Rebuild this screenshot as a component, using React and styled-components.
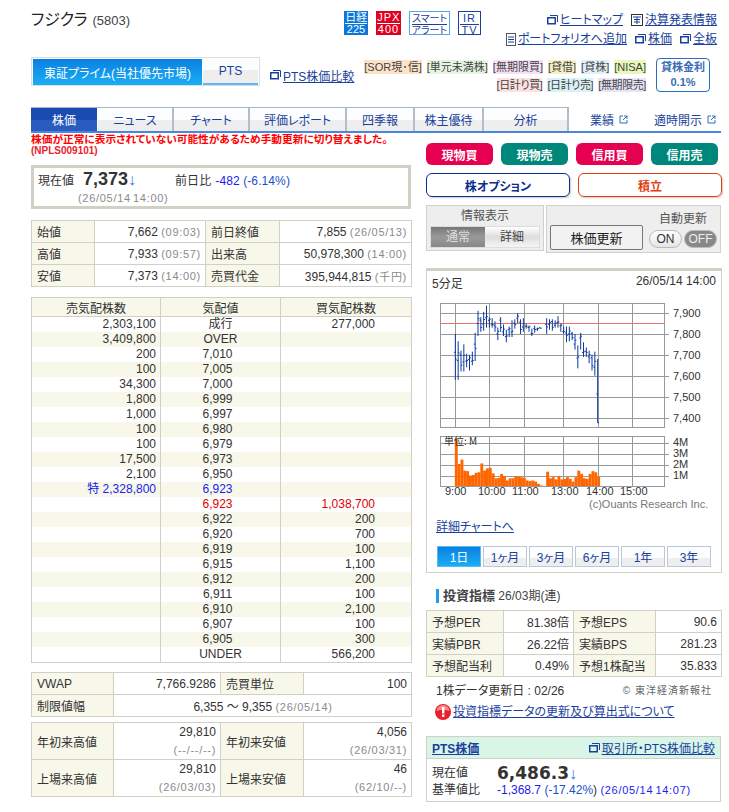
import React from 'react'
import styled, { createGlobalStyle } from 'styled-components'

const GlobalStyle = createGlobalStyle`
    html, body { margin: 0; padding: 0; background: #fff; }
    body {
        font-family: "Liberation Sans", "Noto Sans CJK JP", sans-serif;
        font-size: 12px;
        color: #333;
        font-feature-settings: "palt";
    }
    a { color: #1a3f9c; text-decoration: underline; }
    table { border-collapse: collapse; table-layout: fixed; }
`

const Page = styled.div`
    width: 729px;
    height: 812px;
    box-sizing: border-box;
    padding: 10px 0 0 31px;
    overflow: hidden;
`

const Header = styled.div`
    display: grid;
    grid-template-columns: 313px auto 1fr;
    width: 686px;
    height: 47px;
`

const Title = styled.h1`
    margin: 0;
    font-size: 16px;
    letter-spacing: -0.2px;
    font-weight: 400;
    line-height: 20px;
    color: #222;
    span { font-size: 13px; letter-spacing: 0; color: #444; margin-left: 5px; }
`

const Badges = styled.div`
    display: flex;
    align-items: flex-start;
    gap: 8px;
    padding-top: 1px;
`

const Badge = styled.div`
    box-sizing: border-box;
    width: ${(p) => p.$w}px;
    height: 24px;
    display: flex;
    flex-direction: column;
    align-items: center;
    font-size: ${(p) => p.$fs || 11}px;
    line-height: 11px;
    letter-spacing: ${(p) => p.$ls || 0}px;
    padding-top: 1px;
    color: ${(p) => p.$color || '#fff'};
    background: ${(p) => p.$bg || '#fff'};
    border: ${(p) => (p.$border ? `1px solid ${p.$border}` : 'none')};
    span:first-child { border-bottom: 1px solid currentColor; width: 90%; text-align: center; }
    span { white-space: nowrap; }
`

const HeadLinks = styled.div`
    display: flex;
    flex-direction: column;
    align-items: flex-end;
    gap: 5px;
    padding-top: 3px;
`

const LinkRow = styled.div`
    display: flex;
    gap: 8px;
    line-height: 14px;
`

const IconLink = styled.a`
    display: inline-flex;
    align-items: center;
    gap: 2px;
    white-space: nowrap;
    svg { flex: none; }
`

const MarketRow = styled.div`
    display: flex;
    width: 679px;
    height: 50px;
`

const MarketBox = styled.div`
    box-sizing: border-box;
    display: flex;
    width: 229px;
    height: 29px;
    border: 1px solid #ddd;
    padding: 1px;
`

const MarketTab = styled.div`
    display: flex;
    align-items: center;
    justify-content: center;
    height: 24px;
    width: ${(p) => p.$w}px;
    font-size: 12px;
    border-bottom: ${(p) => (p.$on ? 'none' : '2px solid #5bb8f0')};
    color: ${(p) => (p.$on ? '#fff' : '#1a3f9c')};
    background: ${(p) =>
        p.$on
            ? 'linear-gradient(#0a80e0, #1aaef5)'
            : 'linear-gradient(#fbfdff 45%, #eee 45%)'};
    ${(p) => p.$on && 'height: 26px; margin-right: 1px;'}
`

const CompareLink = styled(IconLink)`
    margin: 11px 0 0 10px;
    height: 14px;
`

const Tags = styled.div`
    margin: 3px 0 0 auto;
    width: 284px;
    display: flex;
    flex-wrap: wrap;
    justify-content: flex-end;
    align-content: flex-start;
    column-gap: 5px;
    row-gap: 4px;
`

const Tag = styled.span`
    font-size: 11px;
    line-height: 14px;
    white-space: nowrap;
    letter-spacing: ${(p) => (p.$tight ? -0.4 : 0)}px;
    color: #444;
    background: ${(p) => p.$bg};
`

const RateBox = styled.div`
    box-sizing: border-box;
    width: 54px;
    height: 34px;
    margin: 1px 0 0 10px;
    border: 1px solid #2a6fc0;
    border-radius: 4px;
    text-align: center;
    font-size: 11px;
    font-weight: 700;
    line-height: 15px;
    padding-top: 1px;
    color: #3a6db5;
`

const TabBar = styled.div`
    box-sizing: border-box;
    display: flex;
    width: 690px;
    height: 26px;
    border-bottom: 2px solid #4a86dc;
`

const TabMain = styled.div`
    display: flex;
    border-top: 1px solid #a9b6c8;
`

const Tab = styled.div`
    box-sizing: border-box;
    width: ${(p) => p.$w}px;
    height: 23px;
    display: flex;
    align-items: center;
    justify-content: center;
    color: ${(p) => (p.$on ? '#fff' : '#1a3f9c')};
    border-right: ${(p) => (p.$on ? '1px solid #fff' : '2px solid #b4bcc6')};
    background: ${(p) =>
        p.$on
            ? 'linear-gradient(#1a4bb0 50%, #2a5cc0 50%)'
            : 'linear-gradient(#fbfdff 50%, #eee 50%)'};
`

const TabExtra = styled.a`
    display: flex;
    align-items: center;
    gap: 5px;
    text-decoration: none;
    margin-left: ${(p) => p.$ml}px;
`

const Warning = styled.div`
    height: 33px;
    font-weight: 700;
    color: #f00;
    font-size: 10.7px;
    line-height: 12px;
    small { display: block; font-size: 10px; color: #e8222e; line-height: 12px; }
`

const Columns = styled.div`
    display: grid;
    grid-template-columns: 380px 296px;
    column-gap: 15px;
    margin-top: -24px;
`

const LeftCol = styled.div`
    padding-top: 23px;
`

const RightCol = styled.div`
    padding-top: 1px;
`

const NowBox = styled.div`
    box-sizing: border-box;
    height: 44px;
    border: 3px solid #d2cfc4;
    padding: 1px 0 0 4px;
    display: grid;
    grid-template-columns: 45px 84px auto;
    align-items: baseline;
    margin-bottom: 11px;
`

const BigPrice = styled.strong`
    font-size: 18px;
    color: #333;
    em { font-style: normal; font-weight: 400; font-size: 16px; color: #3b7de8; }
`

const Change = styled.div`
    margin-left: 8px;
    letter-spacing: 0.1px;
    span { color: #1c1cf0; margin-left: 4px; }
    b { font-weight: 400; color: #1a50c8; }
`

const Stamp = styled.span`
    font-size: ${(p) => p.$size || 11}px;
    letter-spacing: 0.7px;
    word-spacing: -1.5px;
    color: #8a8a8a;
`

const NowStamp = styled(Stamp)`
    grid-column: 2 / 4;
    margin: 0 0 0 -5px;
    line-height: 13px;
`

const Table = styled.table`
    width: ${(p) => p.$w || 380}px;
    margin-bottom: ${(p) => p.$mb || 0}px;
    td, th {
        border: 1px solid #d2cfc4;
        height: ${(p) => p.$rh || 21}px;
        padding: 0 4px 0 5px;
        font-weight: 400;
        color: #333;
        white-space: nowrap;
    }
    th { background: #f7f7ea; text-align: left; }
    td { text-align: right; }
`

const CenterCell = styled.td`
    && { text-align: center; }
`

const Stack = styled.div`
    line-height: 18px;
`

const DepthTable = styled.table`
    width: 380px;
    margin-bottom: 9px;
    border: 1px solid #d2cfc4;
    th {
        height: 18px;
        padding: 0;
        font-weight: 400;
        background: #f7f7ea;
        border: 1px solid #d2cfc4;
    }
    td {
        height: 15px;
        line-height: 15px;
        padding: 0;
        border-left: 1px solid #d2cfc4;
        border-right: 1px solid #d2cfc4;
    }
    tbody tr:nth-child(even) td { background: #f7f7ea; }
`

const SellCell = styled.td`
    text-align: right;
    && { padding-right: 4px; }
    color: ${(p) => (p.$blue ? '#1c1cf0' : '#333')};
`

const PriceCell = styled.td`
    text-align: center;
    && { padding-right: ${(p) => (p.$word ? 0 : 6)}px; }
    color: ${(p) => p.$c || '#333'};
`

const BuyCell = styled.td`
    text-align: right;
    && { padding-right: 36px; }
    color: ${(p) => (p.$red ? '#e00000' : '#333')};
`

const TradeRow = styled.div`
    display: flex;
    gap: 8px;
    margin-bottom: 8px;
`

const TradeBtn = styled.div`
    width: 67px;
    height: 22px;
    border-radius: 6px;
    background: ${(p) => p.$bg};
    color: #fff;
    font-weight: 700;
    display: flex;
    align-items: center;
    justify-content: center;
`

const OutlineBtn = styled.div`
    box-sizing: border-box;
    width: 144px;
    height: 24px;
    border-radius: 6px;
    border: 1px solid ${(p) => p.$c};
    color: ${(p) => p.$c};
    box-shadow: 1px 1px 2px #ccc;
    font-weight: 700;
    display: flex;
    align-items: center;
    justify-content: center;
`

const ControlRow = styled.div`
    display: flex;
    align-items: flex-start;
    gap: 2px;
    margin-bottom: 15px;
`

const GreyPanel = styled.div`
    box-sizing: border-box;
    background: #eee;
    border: 1px solid #d0d0d0;
    width: ${(p) => p.$w}px;
    height: ${(p) => p.$h}px;
`

const DisplayPanel = styled(GreyPanel)`
    text-align: center;
    padding: 3px 3px 0;
    line-height: 14px;
    color: #555;
`

const Segment = styled.div`
    display: flex;
    margin-top: 3px;
    height: 20px;
    border: 1px solid #ddd;
`

const SegmentItem = styled.div`
    flex: 1;
    display: flex;
    align-items: center;
    justify-content: center;
    color: ${(p) => (p.$on ? '#ddd' : '#444')};
    background: ${(p) =>
        p.$on
            ? 'linear-gradient(#777, #999 50%, #888)'
            : 'linear-gradient(#fff, #ddd 50%, #f5f5f5)'};
`

const UpdatePanel = styled(GreyPanel)`
    display: flex;
    padding: 6px 3px 0;
    justify-content: space-between;
`

const UpdateBtn = styled.div`
    box-sizing: border-box;
    width: 93px;
    height: 25px;
    margin-top: 13px;
    border: 1px solid #777;
    border-radius: 2px;
    background: #f2f2f2;
    color: #222;
    font-size: 13px;
    display: flex;
    align-items: center;
    justify-content: center;
`

const AutoBox = styled.div`
    text-align: center;
    color: #555;
    line-height: 14px;
`

const Switches = styled.div`
    display: flex;
    gap: 2px;
    margin-top: 4px;
`

const SwitchBtn = styled.div`
    box-sizing: border-box;
    width: 33px;
    height: 18px;
    border-radius: 9px;
    display: flex;
    align-items: center;
    justify-content: center;
    border: 1px solid #bbb;
    color: ${(p) => (p.$on ? '#eee' : '#333')};
    background: ${(p) => (p.$on ? '#888' : 'linear-gradient(#fff, #e6e6e6)')};
`

const ChartPanel = styled.div`
    box-sizing: border-box;
    width: 296px;
    height: 305px;
    border: 1px solid #d2cfc4;
    border-top-width: 3px;
    margin-bottom: 16px;
`

const ChartHead = styled.div`
    display: flex;
    justify-content: space-between;
    height: 24px;
    padding: 3px 5px 0 5px;
    box-sizing: border-box;
`

const ChartSvg = styled.svg`
    display: block;
    text {
        font-family: "Liberation Sans", sans-serif;
        font-size: 11px;
        fill: #333;
    }
`

const DetailLink = styled.a`
    display: block;
    margin: 3px 0 12px 9px;
    line-height: 14px;
`

const Periods = styled.div`
    display: flex;
    gap: 2px;
    margin-left: 10px;
`

const Period = styled.div`
    box-sizing: border-box;
    width: 44px;
    height: 21px;
    display: flex;
    align-items: center;
    justify-content: center;
    border: 1px solid ${(p) => (p.$on ? '#5bb8f0' : '#bcc8d6')};
    color: ${(p) => (p.$on ? '#fff' : '#1a3f9c')};
    background: ${(p) =>
        p.$on
            ? 'linear-gradient(#0a80e0, #1aaef5)'
            : 'linear-gradient(#fbfdff 60%, #eee 60%)'};
`

const SectionTitle = styled.div`
    border-left: 3px solid #1aa0e8;
    margin: 0 0 7px 10px;
    padding-left: 4px;
    height: 14px;
    line-height: 14px;
    color: #444;
    strong { font-size: 13px; }
`

const DataNote = styled.div`
    display: flex;
    justify-content: space-between;
    margin: 7px 10px 6px 10px;
    line-height: 14px;
    small { font-size: 10px; letter-spacing: 1px; color: #666; }
`

const AlertLink = styled(IconLink)`
    margin-left: 9px;
    line-height: 16px;
`

const PtsPanel = styled.div`
    box-sizing: border-box;
    width: 295px;
    height: 66px;
    margin-top: 13px;
    border: 1px solid #d2cfc4;
`

const PtsHead = styled.div`
    display: flex;
    justify-content: space-between;
    align-items: center;
    height: 21px;
    padding: 0 5px;
    background: #d8f5e8;
    border-bottom: 1px solid #d2cfc4;
    a:first-child { font-weight: 700; }
`

const PtsBody = styled.div`
    display: grid;
    grid-template-columns: 65px auto;
    padding: 6px 5px 0;
    line-height: 16px;
`

const PtsPrice = styled.strong`
    font-family: "DejaVu Sans", sans-serif;
    font-size: 17px;
    line-height: 17px;
    color: #333;
    em {
        font-family: "Liberation Sans", sans-serif;
        font-style: normal;
        font-weight: 400;
        font-size: 16px;
        color: #3b7de8;
    }
`

const PtsChange = styled.div`
    white-space: nowrap;
    span { color: #1c1cf0; }
    b { font-weight: 400; color: #1a50c8; }
    i { font-style: normal; color: #333; }
`

function WindowIcon() {
    return (
        <svg width="11" height="10" viewBox="0 0 11 10">
            <path d="M3 0.5h7.5v6.5" fill="none" stroke="#1a3f9c" />
            <rect x="0.75" y="2.75" width="7.5" height="6" fill="none" stroke="#1a3f9c" strokeWidth="1.5" />
        </svg>
    )
}

function DocIcon() {
    return (
        <svg width="10" height="13" viewBox="0 0 10 13">
            <rect x="0.5" y="0.5" width="9" height="12" fill="#fff" stroke="#555" />
            <path d="M2 4h6M2 6.5h6M2 9h6" stroke="#1a3f9c" />
        </svg>
    )
}

function CalendarIcon() {
    return (
        <svg width="12" height="12" viewBox="0 0 12 12">
            <rect x="0.5" y="0.5" width="11" height="11" fill="#fff" stroke="#333" />
            <path d="M2 3h8M3 5.5h6M3 8h6M6 3v7" stroke="#1a3f9c" />
        </svg>
    )
}

function ExternalIcon() {
    return (
        <svg width="9" height="9" viewBox="0 0 9 9">
            <path d="M4 1H1v7h7V5" fill="none" stroke="#2a6fc0" />
            <path d="M4 5l4-4M5 1h3v3" fill="none" stroke="#2a6fc0" />
        </svg>
    )
}

function AlertIcon() {
    return (
        <svg width="16" height="16" viewBox="0 0 16 16">
            <circle cx="8" cy="8" r="8" fill="#e8202c" />
            <path d="M1.5 7a6.5 6 0 0 1 13 0c-3-1.5-10-1.5-13 0z" fill="#f78a90" />
            <rect x="7" y="3" width="2.4" height="6.5" fill="#fff" />
            <rect x="7" y="10.5" width="2.4" height="2.4" fill="#fff" />
        </svg>
    )
}

const priceY = (p) => 313 + (7900 - p) * 0.209
const morningX = (i) => 425 + (91 + 8.5 * i) / 3
const afternoonX = (i) => 425 + (365 + 8.5 * i) / 3

const morning = [
    [7800, 7580], [7765, 7580], [7720, 7620], [7750, 7620], [7705, 7640], [7700, 7625],
    [7715, 7650], [7805, 7670], [7910, 7790], [7880, 7810], [7905, 7815], [7935, 7830],
    [7880, 7830], [7875, 7830], [7860, 7810], [7830, 7770], [7880, 7810], [7845, 7790],
    [7820, 7760], [7835, 7785], [7865, 7785], [7870, 7825], [7900, 7850], [7870, 7800],
    [7875, 7810], [7850, 7825], [7840, 7810], [7825, 7790], [7840, 7805], [7830, 7815],
    [7830, 7826],
]

const afternoon = [
    [7875, 7800], [7870, 7820], [7870, 7815], [7865, 7830], [7885, 7830], [7850, 7810],
    [7835, 7800], [7835, 7760], [7835, 7765], [7810, 7770], [7800, 7725], [7745, 7635],
    [7805, 7725], [7760, 7690], [7735, 7690], [7720, 7660], [7700, 7625], [7715, 7600],
    [7680, 7375],
]

const morningVol = [
    4.3, 2.0, 2.4, 1.4, 1.35, 0.95, 1.0, 1.2, 1.25, 2.05, 1.4, 1.6, 1.65, 1.15, 0.7, 0.75,
    1.1, 0.9, 0.5, 0.7, 0.7, 0.9, 0.85, 0.8, 0.75, 0.5, 0.45, 0.5, 0.4, 0.2, 0.05,
]

const afternoonVol = [
    1.3, 0.7, 0.8, 0.6, 0.9, 0.6, 0.65, 0.8, 0.65, 0.4, 0.8, 1.4, 1.1, 0.7, 0.65, 1.1, 1.35,
    1.25, 0.85,
]

const gridX = [455, 489, 524, 563, 598, 632]
const fracs = [0.45, 0.7, 0.3, 0.6, 0.5, 0.8, 0.35]

function OhlcBars({ data, getX }) {
    return data.map(([high, low], i) => {
        const x = getX(i)
        const close = i === data.length - 1 && low === 7375 ? low : low + (high - low) * fracs[i % 7]
        const open = low + (high - low) * fracs[(i + 3) % 7]
        return (
            <g key={i} stroke="#0a3a9c" fill="none">
                <path d={`M${x} ${priceY(high)}V${priceY(low)}`} strokeWidth="1" />
                <path d={`M${x - 1.4} ${priceY(open)}H${x}M${x} ${priceY(close)}H${x + 1.4}`} strokeWidth="1" />
            </g>
        )
    })
}

function VolumeBars({ data, getX }) {
    return data.map((v, i) => (
        <rect key={i} x={getX(i) - 0.5} y={486 - v * 11} width="2.9" height={v * 11} fill="#ff6600" />
    ))
}

function Chart() {
    return (
        <ChartSvg width="294" height="222" viewBox="427 295 294 222">
            <g stroke="#999" fill="none">
                <rect x="440.5" y="303.5" width="224" height="124" />
                {[313, 334, 355, 376, 397, 418].map((y) => (
                    <path key={y} d={`M440 ${y + 0.5}H669`} />
                ))}
                {gridX.map((x) => (
                    <path key={x} d={`M${x + 0.5} 303V427`} />
                ))}
            </g>
            <path d="M440 323.5H664" stroke="#f07070" />
            <OhlcBars data={morning} getX={morningX} />
            <OhlcBars data={afternoon} getX={afternoonX} />
            {[7900, 7800, 7700, 7600, 7500, 7400].map((p, i) => (
                <text key={p} x="673" y={317 + i * 21}>
                    {p.toLocaleString('en-US')}
                </text>
            ))}
            <g stroke="#999" fill="none">
                <rect x="440.5" y="436.5" width="224" height="50" />
                {[443, 454, 465, 476].map((y) => (
                    <path key={y} d={`M440 ${y + 0.5}H669`} />
                ))}
                {gridX.map((x) => (
                    <path key={x} d={`M${x + 0.5} 436V486`} />
                ))}
            </g>
            <VolumeBars data={morningVol} getX={morningX} />
            <VolumeBars data={afternoonVol} getX={afternoonX} />
            <text x="444" y="445" style={{ fontSize: 10, fontFamily: '"Noto Sans CJK JP", sans-serif' }}>
                単位: M
            </text>
            {['4M', '3M', '2M', '1M'].map((m, i) => (
                <text key={m} x="673" y={446 + i * 11}>
                    {m}
                </text>
            ))}
            {[
                ['9:00', 445],
                ['10:00', 478],
                ['11:00', 512],
                ['13:00', 551],
                ['14:00', 586],
                ['15:00', 620],
            ].map(([t, x]) => (
                <text key={t} x={x} y="495">
                    {t}
                </text>
            ))}
            <text x="589" y="508" style={{ fill: '#777', fontSize: 11 }}>
                (c)Ouants Research Inc.
            </text>
        </ChartSvg>
    )
}

const depthRows = [
    ['2,303,100', '成行', '277,000'],
    ['3,409,800', 'OVER', ''],
    ['200', '7,010', ''],
    ['100', '7,005', ''],
    ['34,300', '7,000', ''],
    ['1,800', '6,999', ''],
    ['1,000', '6,997', ''],
    ['100', '6,980', ''],
    ['100', '6,979', ''],
    ['17,500', '6,973', ''],
    ['2,100', '6,950', ''],
    ['特 2,328,800', '6,923', ''],
    ['', '6,923', '1,038,700'],
    ['', '6,922', '200'],
    ['', '6,920', '700'],
    ['', '6,919', '100'],
    ['', '6,915', '1,100'],
    ['', '6,912', '200'],
    ['', '6,911', '100'],
    ['', '6,910', '2,100'],
    ['', '6,907', '100'],
    ['', '6,905', '300'],
    ['', 'UNDER', '566,200'],
]

const tabs = [
    ['株価', 67, true],
    ['ニュース', 76],
    ['チャート', 76],
    ['評価レポート', 97],
    ['四季報', 68],
    ['株主優待', 69],
    ['分析', 85],
]

function App() {
    return (
        <Page>
            <GlobalStyle />
            <Header>
                <Title>
                    フジクラ<span>(5803)</span>
                </Title>
                <Badges>
                    <Badge $w={24} $bg="#0a78d8">
                        <span>日経</span>
                        <span>225</span>
                    </Badge>
                    <Badge $w={25} $bg="#e00020" $ls={1}>
                        <span>JPX</span>
                        <span>400</span>
                    </Badge>
                    <Badge $w={41} $fs={10} $color="#1a3f9c" $border="#5aa5ea">
                        <span>スマート</span>
                        <span>アラート</span>
                    </Badge>
                    <Badge $w={23} $color="#1a3f9c" $border="#1a3f9c" $ls={1}>
                        <span>IR</span>
                        <span>TV</span>
                    </Badge>
                </Badges>
                <HeadLinks>
                    <LinkRow>
                        <IconLink href="#"><WindowIcon />ヒートマップ</IconLink>
                        <IconLink href="#"><CalendarIcon />決算発表情報</IconLink>
                    </LinkRow>
                    <LinkRow>
                        <IconLink href="#"><DocIcon />ポートフォリオへ追加</IconLink>
                        <IconLink href="#"><WindowIcon />株価</IconLink>
                        <IconLink href="#"><WindowIcon />全板</IconLink>
                    </LinkRow>
                </HeadLinks>
            </Header>

            <MarketRow>
                <MarketBox>
                    <MarketTab $w={169} $on>東証プライム(当社優先市場)</MarketTab>
                    <MarketTab $w={55}>PTS</MarketTab>
                </MarketBox>
                <CompareLink href="#"><WindowIcon />PTS株価比較</CompareLink>
                <Tags>
                    <Tag $bg="#fde2c8">[SOR現･信]</Tag>
                    <Tag $bg="#e6f5e2">[単元未満株]</Tag>
                    <Tag $bg="#f5e0f5">[無期限買]</Tag>
                    <Tag $bg="#f5f0c8">[貸借]</Tag>
                    <Tag $bg="#e0f0fa">[貸株]</Tag>
                    <Tag $bg="#e8f8b8">[NISA]</Tag>
                    <Tag $bg="#fde0e0" $tight>[日計り買]</Tag>
                    <Tag $bg="#d8f2f5" $tight>[日計り売]</Tag>
                    <Tag $bg="#e8e4f5" $tight>[無期限売]</Tag>
                </Tags>
                <RateBox>
                    貸株金利
                    <br />
                    0.1%
                </RateBox>
            </MarketRow>

            <TabBar>
                <TabMain>
                    {tabs.map(([label, w, on]) => (
                        <Tab key={label} $w={w} $on={on}>{label}</Tab>
                    ))}
                </TabMain>
                <TabExtra href="#" $ml={21}>業績<ExternalIcon /></TabExtra>
                <TabExtra href="#" $ml={26}>適時開示<ExternalIcon /></TabExtra>
            </TabBar>

            <Warning>
                株価が正常に表示されていない可能性があるため手動更新に切り替えました。
                <small>(NPLS009101)</small>
            </Warning>

            <Columns>
                <LeftCol>
                    <NowBox>
                        <span>現在値</span>
                        <BigPrice>7,373<em>↓</em></BigPrice>
                        <Change>
                            前日比<span>-482</span> <b>(-6.14%)</b>
                        </Change>
                        <span />
                        <NowStamp>(26/05/14 14:00)</NowStamp>
                    </NowBox>

                    <Table $mb={10}>
                        <colgroup>
                            <col width="63" /><col width="111" /><col width="74" /><col width="132" />
                        </colgroup>
                        <tbody>
                            <tr>
                                <th>始値</th><td>7,662 <Stamp>(09:03)</Stamp></td>
                                <th>前日終値</th><td>7,855 <Stamp>(26/05/13)</Stamp></td>
                            </tr>
                            <tr>
                                <th>高値</th><td>7,933 <Stamp>(09:57)</Stamp></td>
                                <th>出来高</th><td>50,978,300 <Stamp>(14:00)</Stamp></td>
                            </tr>
                            <tr>
                                <th>安値</th><td>7,373 <Stamp>(14:00)</Stamp></td>
                                <th>売買代金</th><td>395,944,815 <Stamp>(千円)</Stamp></td>
                            </tr>
                        </tbody>
                    </Table>

                    <DepthTable>
                        <colgroup>
                            <col width="129" /><col width="120" /><col width="131" />
                        </colgroup>
                        <thead>
                            <tr><th>売気配株数</th><th>気配値</th><th>買気配株数</th></tr>
                        </thead>
                        <tbody>
                            {depthRows.map(([sell, price, buy], i) => (
                                <tr key={i}>
                                    <SellCell $blue={sell.startsWith('特')}>{sell}</SellCell>
                                    <PriceCell
                                        $word={!/\d/.test(price)}
                                        $c={i === 11 ? '#1c1cf0' : i === 12 ? '#e00000' : undefined}
                                    >
                                        {price}
                                    </PriceCell>
                                    <BuyCell $red={i === 12}>{buy}</BuyCell>
                                </tr>
                            ))}
                        </tbody>
                    </DepthTable>

                    <Table $mb={5}>
                        <colgroup>
                            <col width="82" /><col width="107" /><col width="83" /><col width="108" />
                        </colgroup>
                        <tbody>
                            <tr>
                                <th>VWAP</th><td>7,766.9286</td>
                                <th>売買単位</th><td>100</td>
                            </tr>
                            <tr>
                                <th>制限値幅</th>
                                <CenterCell colSpan={3}>6,355 〜 9,355 <Stamp>(26/05/14)</Stamp></CenterCell>
                            </tr>
                        </tbody>
                    </Table>

                    <Table $rh={36}>
                        <colgroup>
                            <col width="82" /><col width="107" /><col width="83" /><col width="108" />
                        </colgroup>
                        <tbody>
                            <tr>
                                <th>年初来高値</th>
                                <td><Stack>29,810<br /><Stamp>(--/--/--)</Stamp></Stack></td>
                                <th>年初来安値</th>
                                <td><Stack>4,056<br /><Stamp>(26/03/31)</Stamp></Stack></td>
                            </tr>
                            <tr>
                                <th>上場来高値</th>
                                <td><Stack>29,810<br /><Stamp>(26/03/03)</Stamp></Stack></td>
                                <th>上場来安値</th>
                                <td><Stack>46<br /><Stamp>(62/10/--)</Stamp></Stack></td>
                            </tr>
                        </tbody>
                    </Table>
                </LeftCol>

                <RightCol>
                    <TradeRow>
                        <TradeBtn $bg="#e60050">現物買</TradeBtn>
                        <TradeBtn $bg="#00877b">現物売</TradeBtn>
                        <TradeBtn $bg="#e60050">信用買</TradeBtn>
                        <TradeBtn $bg="#00877b">信用売</TradeBtn>
                    </TradeRow>
                    <TradeRow>
                        <OutlineBtn $c="#0a2e8c">株オプション</OutlineBtn>
                        <OutlineBtn $c="#e04010">積立</OutlineBtn>
                    </TradeRow>
                    <ControlRow>
                        <DisplayPanel $w={118} $h={46}>
                            情報表示
                            <Segment>
                                <SegmentItem $on>通常</SegmentItem>
                                <SegmentItem>詳細</SegmentItem>
                            </Segment>
                        </DisplayPanel>
                        <UpdatePanel $w={175} $h={48}>
                            <UpdateBtn>株価更新</UpdateBtn>
                            <AutoBox>
                                自動更新
                                <Switches>
                                    <SwitchBtn>ON</SwitchBtn>
                                    <SwitchBtn $on>OFF</SwitchBtn>
                                </Switches>
                            </AutoBox>
                        </UpdatePanel>
                    </ControlRow>

                    <ChartPanel>
                        <ChartHead>
                            <span>5分足</span>
                            <span>26/05/14 14:00</span>
                        </ChartHead>
                        <Chart />
                        <DetailLink href="#">詳細チャートへ</DetailLink>
                        <Periods>
                            <Period $on>1日</Period>
                            <Period>1ヶ月</Period>
                            <Period>3ヶ月</Period>
                            <Period>6ヶ月</Period>
                            <Period>1年</Period>
                            <Period>3年</Period>
                        </Periods>
                    </ChartPanel>

                    <SectionTitle>
                        <strong>投資指標</strong> 26/03期(連)
                    </SectionTitle>
                    <Table $w={295}>
                        <colgroup>
                            <col width="77" /><col width="70" /><col width="82" /><col width="66" />
                        </colgroup>
                        <tbody>
                            <tr>
                                <th>予想PER</th><td>81.38倍</td>
                                <th>予想EPS</th><td>90.6</td>
                            </tr>
                            <tr>
                                <th>実績PBR</th><td>26.22倍</td>
                                <th>実績BPS</th><td>281.23</td>
                            </tr>
                            <tr>
                                <th>予想配当利</th><td>0.49%</td>
                                <th>予想1株配当</th><td>35.833</td>
                            </tr>
                        </tbody>
                    </Table>
                    <DataNote>
                        <span>1株データ更新日 : 02/26</span>
                        <small>© 東洋経済新報社</small>
                    </DataNote>
                    <AlertLink href="#"><AlertIcon />投資指標データの更新及び算出式について</AlertLink>

                    <PtsPanel>
                        <PtsHead>
                            <a href="#">PTS株価</a>
                            <IconLink href="#"><WindowIcon />取引所・PTS株価比較</IconLink>
                        </PtsHead>
                        <PtsBody>
                            <span>現在値</span>
                            <PtsPrice>6,486.3<em>↓</em></PtsPrice>
                            <span>基準値比</span>
                            <PtsChange>
                                <span>-1,368.7</span> <b>(-17.42%</b><i>)</i> <Stamp>(26/05/14 14:07)</Stamp>
                            </PtsChange>
                        </PtsBody>
                    </PtsPanel>
                </RightCol>
            </Columns>
        </Page>
    )
}

export default App
